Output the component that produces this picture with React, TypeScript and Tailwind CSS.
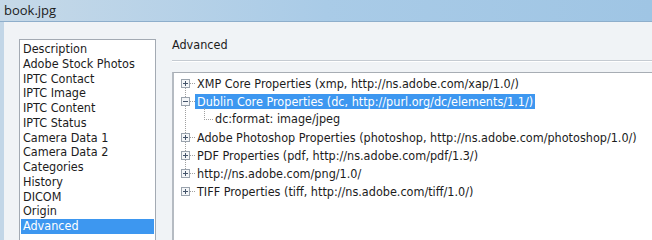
import React from "react";

const listItems = [
  "Description",
  "Adobe Stock Photos",
  "IPTC Contact",
  "IPTC Image",
  "IPTC Content",
  "IPTC Status",
  "Camera Data 1",
  "Camera Data 2",
  "Categories",
  "History",
  "DICOM",
  "Origin",
  "Advanced",
];

type Node = { label: string; expanded?: boolean; selected?: boolean; children?: string[] };

const tree: Node[] = [
  { label: "XMP Core Properties (xmp, http://ns.adobe.com/xap/1.0/)" },
  {
    label: "Dublin Core Properties (dc, http://purl.org/dc/elements/1.1/)",
    expanded: true,
    selected: true,
    children: ["dc:format: image/jpeg"],
  },
  { label: "Adobe Photoshop Properties (photoshop, http://ns.adobe.com/photoshop/1.0/)" },
  { label: "PDF Properties (pdf, http://ns.adobe.com/pdf/1.3/)" },
  { label: "http://ns.adobe.com/png/1.0/" },
  { label: "TIFF Properties (tiff, http://ns.adobe.com/tiff/1.0/)" },
];

function Expander({ expanded }: { expanded?: boolean }) {
  return (
    <svg width="9" height="9" viewBox="0 0 9 9" className="shrink-0">
      <rect x="0.5" y="0.5" width="8" height="8" fill="#f4f6f8" stroke="#9aa3ad" />
      <line x1="2" y1="4.5" x2="7" y2="4.5" stroke="#44546a" />
      {!expanded && <line x1="4.5" y1="2" x2="4.5" y2="7" stroke="#44546a" />}
    </svg>
  );
}

const font = { fontFamily: "'DejaVu Sans Condensed', 'DejaVu Sans', sans-serif" };

export default function App() {
  return (
    <div className="w-[652px] h-[240px] overflow-hidden bg-[#f1f4f7] flex flex-col">
      <div
        className="h-[22px] shrink-0 border-b border-[#8eaecb] bg-gradient-to-r from-[#c6d9e8] via-[#a9cbe7] to-[#9fc5e4] flex items-center pl-[4px] text-[13px] text-[#1b1b1b]"
        style={{ fontFamily: "'Open Sans', 'Noto Sans', sans-serif" }}
      >
        book.jpg
      </div>
      <div className="flex-1 flex border-l-[4px] border-[#c2d6e7] bg-[#f0f3f6]">
        <div className="flex pl-[15px] pt-[17px] w-full" style={font}>
          <div className="w-[137px] h-[240px] shrink-0 border border-[#a3aab3] bg-white pt-[2px] px-[1px] text-[12.5px] text-[#1c1c1c]">
            {listItems.map((it) => (
              <div
                key={it}
                className={
                  "h-[14.75px] leading-[14.75px] pl-[2px] whitespace-nowrap " +
                  (it === "Advanced" ? "bg-[#3d97f0] text-white" : "")
                }
              >
                {it}
              </div>
            ))}
          </div>
          <div className="flex-1 pl-[16px] -mt-[2px] min-w-0">
            <div className="text-[12.5px] leading-[16px] text-[#1c1c1c] whitespace-nowrap">Advanced</div>
            <div className="mt-[7px] h-[2px] bg-[#c5cbd2] border-b border-white mr-[-20px]" />
            <div className="mt-[10px] h-[200px] border border-[#a7adb4] border-l-[2px] border-l-[#b5bbc2] bg-white mr-[-20px] pt-[2px] text-[12.5px] text-[#1c1c1c] relative">
              <div className="absolute left-[11px] top-[12px] h-[88px] border-l border-dotted border-[#a0a0a0]" />
              {tree.map((n) => (
                <React.Fragment key={n.label}>
                  <div className="h-[17.9px] flex items-center pl-[7px] whitespace-nowrap relative">
                    <Expander expanded={n.expanded} />
                    <div className="w-[5px] border-t border-dotted border-[#a0a0a0]" />
                    <span className={"px-[2px] leading-[15px] " + (n.selected ? "bg-[#3d97f0] text-white" : "")}>
                      {n.label}
                    </span>
                  </div>
                  {n.children?.map((c) => (
                    <div key={c} className="h-[17.9px] flex items-center pl-[30px] whitespace-nowrap relative">
                      <div className="absolute left-[30px] top-[-3px] h-[12px] border-l border-dotted border-[#a0a0a0]" />
                      <div className="w-[9px] border-t border-dotted border-[#a0a0a0]" />
                      <span className="pl-[2px]">{c}</span>
                    </div>
                  ))}
                </React.Fragment>
              ))}
            </div>
          </div>
        </div>
      </div>
    </div>
  );
}
